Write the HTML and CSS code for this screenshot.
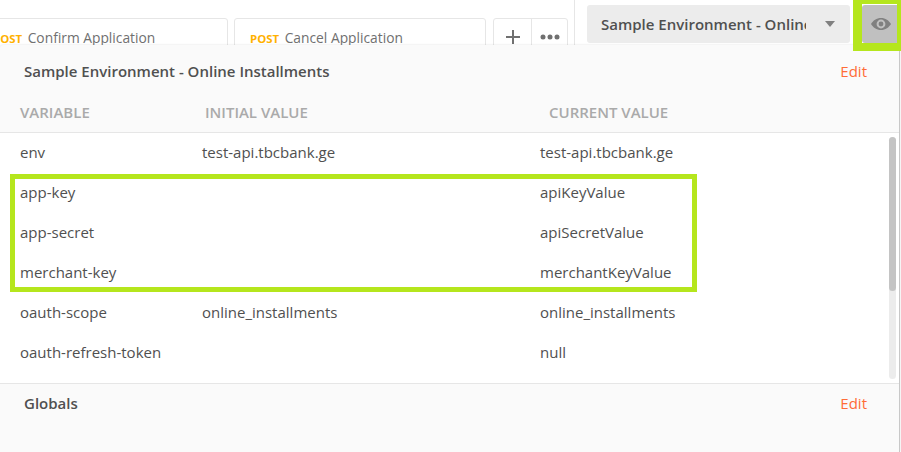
FILE: index.html
```html
<!DOCTYPE html>
<html>
<head>
<meta charset="UTF-8">
<title>Manage Environment</title>
<link rel="stylesheet" href="styles.css">
</head>
<body>

<div class="topbar">
	<div class="tabs">
		<div class="tab tab-first"><span class="method">POST</span> Confirm Application</div>
		<div class="tab tab-second"><span class="method">POST</span> Cancel Application</div>
		<div class="tab-actions">
			<div class="tab-btn">
				<svg width="16" height="16" viewBox="0 0 16 16"><path d="M8 1v14M1 8h14" stroke="#707070" stroke-width="2" fill="none"/></svg>
			</div>
			<div class="tab-btn">
				<svg width="20" height="6" viewBox="0 0 20 6"><circle cx="3" cy="3" r="2.500" fill="#707070"/><circle cx="10" cy="3" r="2.500" fill="#707070"/><circle cx="17" cy="3" r="2.500" fill="#707070"/></svg>
			</div>
		</div>
	</div>
	<div class="env-area">
		<div class="env-select">
			<span class="env-name">Sample Environment - Online Installments</span>
			<span class="caret"></span>
		</div>
		<div class="eye-btn">
			<svg width="20" height="12" viewBox="0 0 20 12"><path fill-rule="evenodd" fill="#808080" d="M10 0C5.500 0 2 2.600 0 6c2 3.400 5.500 6 10 6s8-2.600 10-6c-2-3.400-5.500-6-10-6zm0 1.600a4.400 4.400 0 1 1 0 8.800 4.400 4.400 0 0 1 0-8.800zM10 3.600a2.400 2.400 0 1 0 0 4.800 2.400 2.400 0 0 0 0-4.800z"/></svg>
		</div>
	</div>
</div>

<div class="panel">
	<div class="panel-title">
		<span>Sample Environment - Online Installments</span>
		<a class="edit">Edit</a>
	</div>
	<div class="var-head">
		<div>VARIABLE</div>
		<div>INITIAL VALUE</div>
		<div>CURRENT VALUE</div>
	</div>
	<div class="var-list">
		<div class="var-row"><div>env</div><div>test-api.tbcbank.ge</div><div>test-api.tbcbank.ge</div></div>
		<div class="var-row"><div>app-key</div><div></div><div>apiKeyValue</div></div>
		<div class="var-row"><div>app-secret</div><div></div><div>apiSecretValue</div></div>
		<div class="var-row"><div>merchant-key</div><div></div><div>merchantKeyValue</div></div>
		<div class="var-row"><div>oauth-scope</div><div>online_installments</div><div>online_installments</div></div>
		<div class="var-row"><div>oauth-refresh-token</div><div></div><div>null</div></div>
		<div class="scrollbar"><div class="scroll-thumb"></div></div>
	</div>
	<div class="panel-foot">
		<span>Globals</span>
		<a class="edit">Edit</a>
	</div>
	<div class="mark-rows"></div>
</div>

<div class="mark-eye"></div>

</body>
</html>
```

FILE: styles.css
```css
* {
	box-sizing: border-box;
}

body {
	margin: 0;
	width: 901px;
	height: 452px;
	overflow: hidden;
	background: #fff;
	font-family: "Open Sans", "Liberation Sans", sans-serif;
	font-size: 15px;
	color: #505050;
}

.topbar {
	display: flex;
	height: 45px;
	overflow: hidden;
}

.tabs {
	display: flex;
	width: 574px;
	margin-left: -23px;
	padding-top: 18px;
	flex: none;
}

.tab {
	flex: none;
	height: 60px;
	padding: 9px 0 0 15px;
	border: 1px solid #e6e6e6;
	border-radius: 3px;
	font-size: 13.800px;
	color: #707070;
	white-space: nowrap;
}

.tab-first {
	width: 251px;
}

.tab-second {
	width: 252px;
	margin-left: 6px;
}

.method {
	margin-right: 2px;
	font-size: 11.400px;
	font-weight: 700;
	color: #ffb100;
}

.tab-actions {
	display: flex;
	flex: none;
	height: 60px;
	margin-left: 7px;
	border: 1px solid #e6e6e6;
	border-radius: 3px;
}

.tab-btn {
	display: flex;
	justify-content: center;
	padding-top: 10px;
	width: 37px;
	height: 27px;
}

.tab-btn svg {
	display: block;
}

.tab-btn + .tab-btn {
	width: 36px;
	height: 60px;
	padding-top: 15px;
	border-left: 1px solid #e6e6e6;
}

.env-area {
	display: flex;
	flex: 1;
	padding: 5px 0 0 12px;
	margin-left: 23px;
	border-left: 1px solid #e6e6e6;
}

.env-select {
	display: flex;
	align-items: center;
	flex: none;
	width: 263px;
	height: 38px;
	padding-left: 14px;
	background: #ececec;
	border-radius: 3px;
}

.env-name {
	width: 205px;
	overflow: hidden;
	white-space: nowrap;
	font-weight: 600;
	color: #505050;
}

.caret {
	margin-left: 19px;
	border-top: 6px solid #808080;
	border-left: 5.500px solid transparent;
	border-right: 5.500px solid transparent;
}

.eye-btn {
	display: flex;
	align-items: center;
	justify-content: center;
	flex: none;
	width: 39px;
	height: 38px;
	margin-left: 12px;
	padding-right: 1px;
	background: #c0c0c0;
	border-radius: 3px;
}

/* dropdown lies over the tabs */
.panel {
	position: absolute;
	left: 0;
	top: 45px;
	width: 900px;
	height: 407px;
	display: flex;
	flex-direction: column;
	background: #fafafa;
	border-right: 1px solid #c8c8c8;
	border-radius: 3px 3px 0 0;
	box-shadow: 0 0 2px rgba(0, 0, 0, 0.15);
}

.panel-title {
	display: flex;
	justify-content: space-between;
	align-items: center;
	height: 52px;
	padding: 0 32px 0 24px;
	font-weight: 600;
}

.edit {
	font-weight: 400;
	color: #ff6c37;
}

.var-head {
	display: grid;
	grid-template-columns: 185px 344px 1fr;
	height: 36px;
	padding: 5px 0 0 20px;
	border-bottom: 1px solid #e6e6e6;
	font-weight: 600;
	color: #aaa;
}

.var-list {
	position: relative;
	height: 250px;
	background: #fff;
}

.var-row {
	display: grid;
	grid-template-columns: 182px 338px 1fr;
	align-items: center;
	height: 40px;
	padding: 0 0 2px 20px;
}

.scrollbar {
	position: absolute;
	left: 889px;
	top: 4px;
	width: 7px;
	height: 242px;
	background: #ececec;
	border-radius: 4px;
}

.scroll-thumb {
	height: 154px;
	background: #c4c4c4;
	border-radius: 4px;
}

.panel-foot {
	display: flex;
	justify-content: space-between;
	flex: 1;
	padding: 9px 32px 0 24px;
	border-top: 1px solid #e6e6e6;
	font-weight: 600;
}

.mark-rows {
	position: absolute;
	left: 10px;
	top: 129px;
	width: 687px;
	height: 118px;
	border: 5px solid #b5e61d;
}

.mark-eye {
	position: absolute;
	left: 853px;
	top: 0;
	width: 48px;
	height: 51px;
	border: solid #b5e61d;
	border-width: 4px 4px 8px 9px;
}
```
